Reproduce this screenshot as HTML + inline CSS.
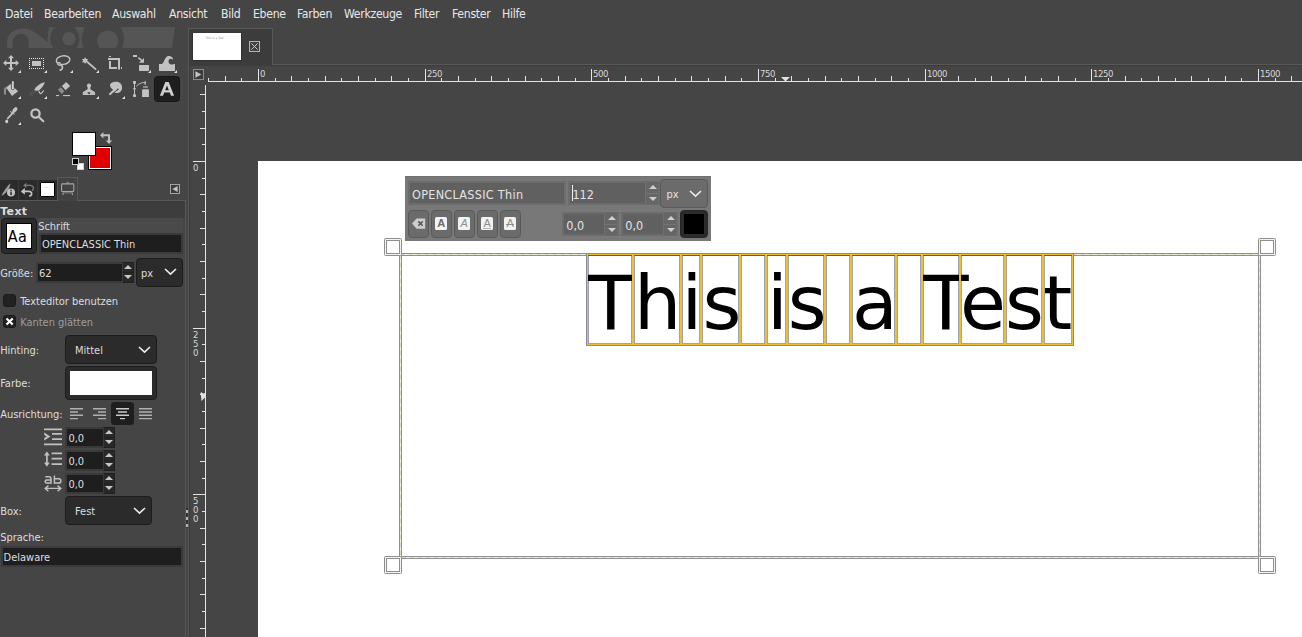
<!DOCTYPE html>
<html lang="de">
<head>
<meta charset="utf-8">
<title>GIMP</title>
<style>
*{box-sizing:border-box;margin:0;padding:0}
html,body{width:1302px;height:637px;overflow:hidden;background:#454545}
body{position:relative;font-family:"DejaVu Sans Condensed","DejaVu Sans","Liberation Sans",sans-serif;font-stretch:condensed;font-size:11px;color:#dedede;line-height:14px;-webkit-font-smoothing:antialiased}
.abs,body>div,body>span,body>i,body>svg{position:absolute}
i.t{position:absolute;display:block;background:#e4e4e4;width:1px}
.rl{position:absolute;font-size:9.5px;line-height:12px;color:#d8d8d8;white-space:nowrap;letter-spacing:-0.4px}
.vl{position:absolute;font-size:9.5px;line-height:9px;color:#d8d8d8;width:10px;text-align:center}
.vl span{display:block}
#menubar{left:0;top:0;width:1302px;height:27px;background:#454545}
#menubar span{position:absolute;top:5px;line-height:18px;white-space:nowrap;color:#e8e8e8;font-size:12.2px;letter-spacing:-0.32px}
#canvas{left:206px;top:82px;width:1096px;height:555px;background:#454545}
#image{left:258px;top:161px;width:1044px;height:476px;background:#fff}
.lbl{position:absolute;white-space:nowrap;line-height:14px;margin-top:1px;margin-left:-0.8px;letter-spacing:-0.03px}
.entry{position:absolute;background:#1e1e1e;border:2px solid #3a3a3a;box-shadow:inset 0 0 0 0 #000}
.entry span{position:absolute;white-space:nowrap;line-height:14px;margin-top:1px;margin-left:-0.6px}
.drop{position:absolute;background:#2b2b2b;border:1px solid #1c1c1c;border-radius:4px}
.drop span{position:absolute;white-space:nowrap;line-height:14px;margin-top:1px;margin-left:-1px}
.ic .c{fill:#e2e2e2}
.spin{position:absolute;width:12px;background:#282828;border:1px solid #202020;border-left-color:#3a3a3a}
.spin b{position:absolute;left:1px;width:0;height:0;border-left:4px solid transparent;border-right:4px solid transparent}
.spin b.u{top:1.8px;border-bottom:4.4px solid #c8c8c8}
.spin b.d{bottom:2.6px;border-top:4.4px solid #c8c8c8}
.spin i{position:absolute;left:0;right:0;top:9px;height:1px;background:#202020}
.chev{position:absolute;fill:none;stroke:#ececec;stroke-width:1.6}
.chk{position:absolute;width:13px;height:13px;background:#222;border:1px solid #1c1c1c;border-radius:3px}
.dh{background:repeating-linear-gradient(90deg,#d8d8d8 0,#d8d8d8 4px,#f4f4c6 4px,#f4f4c6 8px)}
.dv{background:repeating-linear-gradient(180deg,#d8d8d8 0,#d8d8d8 4px,#f4f4c6 4px,#f4f4c6 8px)}
.hd{width:18px;height:18px;border:1px solid #8e8e8e;border-radius:1.5px;background:#fff;box-shadow:inset 0 0 0 1px #f4f4f4,inset 0 0 0 2px #8e8e8e}
#ctext{font-family:"DejaVu Sans","Liberation Sans",sans-serif;font-stretch:normal;font-size:74.67px;line-height:91px;color:#000;white-space:pre;outline:1px solid #878b96;font-kerning:none}
#ctext span{position:absolute;top:0;height:91px;line-height:99px;white-space:pre}
#ctext span.k::first-letter{margin-right:-7.7px}
#ctext i{position:absolute;top:0;height:91px;border:1px solid #ecbe3c;box-shadow:inset 0 0 0 1px rgba(0,0,0,0.36)}
#ov{left:405px;top:176px;width:306px;height:65px;background:#787878;box-shadow:inset 0 1px 0 #707070}
#ov .e{position:absolute;background:#606060;border:2px solid #6c6c6c}
#ov .e span,#ov .b span{position:absolute;white-space:nowrap;line-height:14px;color:#e4e4e4}
#ov .e span{font-size:12.5px;line-height:16px}
#ov .b{position:absolute;background:#6b6b6b;border:1px solid #595959;border-radius:4px}
#ov .sp{position:absolute;width:13px;background:#666;border-left:1px solid #707070}
#ov .sp b{position:absolute;left:2.5px;width:0;height:0;border-left:4px solid transparent;border-right:4px solid transparent}
#ov .sp b.u{top:3px;border-bottom:4.5px solid #d0d0d0}
#ov .sp b.d{bottom:3px;border-top:4.5px solid #d0d0d0}
#ov .sp i{position:absolute;left:0;right:0;top:50%;height:1px;background:#747474;margin-top:-0.5px}
#ov .ai{position:absolute;left:3.2px;top:6px;width:12px;height:12.8px;background:#f2f2f2;border-radius:1.5px;color:#6a6a6a;font-family:"Liberation Sans",sans-serif;font-stretch:normal;font-size:11px;line-height:13.5px;text-align:center}
</style>
</head>
<body>
<!-- menubar -->
<div id="menubar">
<span style="left:5px">Datei</span><span style="left:44px">Bearbeiten</span><span style="left:112px">Auswahl</span><span style="left:169px">Ansicht</span><span style="left:221px">Bild</span><span style="left:253px">Ebene</span><span style="left:297px">Farben</span><span style="left:344px">Werkzeuge</span><span style="left:414px">Filter</span><span style="left:452px">Fenster</span><span style="left:502px">Hilfe</span>
</div>
<!-- wilber -->
<svg class="abs" style="left:0;top:27px" width="186" height="21" viewBox="0 27 186 21">
<g fill="#555555">
<path d="M7 48 L7 42.4 C7 34 14 28.4 22 28.4 C32 28.4 40 35 47.3 42.3 L48.6 27 L84 27 L84 48 Z"/>
<path d="M100 27 L175 27 L172 48 L100 48 Z"/>
</g>
<path d="M13.1 48 L13.1 41.5 A7.75 7.75 0 0 1 28.6 41.5 L28.6 48 Z" fill="#454545"/>
<circle cx="64.8" cy="38.5" r="14.6" fill="#454545"/>
<circle cx="69" cy="38.8" r="6.7" fill="#555555"/>
<circle cx="102.9" cy="39" r="21.2" fill="#454545"/>
<circle cx="107.7" cy="41" r="10.6" fill="#555555"/>
</svg>
<!-- tool icons row 1 -->
<svg class="abs ic" style="left:3px;top:55px" width="19" height="19" viewBox="0 0 19 19"><path fill="#c2c2c2" d="M8 0 L11 3.3 L9 3.3 L9 7 L12.7 7 L12.7 5 L16 8 L12.7 11 L12.7 9 L9 9 L9 12.7 L11 12.7 L8 16 L5 12.7 L7 12.7 L7 9 L3.3 9 L3.3 11 L0 8 L3.3 5 L3.3 7 L7 7 L7 3.3 L5 3.3 Z"/><path class="c" d="M18 15v3h-3z"/></svg>
<svg class="abs ic" style="left:29px;top:55px" width="19" height="19" viewBox="0 0 19 19"><g stroke="#e8e8e8" stroke-width="1" stroke-dasharray="1 1"><path d="M0 3.5H15"/><path d="M0 13.5H15"/><path d="M0.5 3V14"/><path d="M14.5 3V14"/></g><rect x="3" y="6" width="9" height="5" fill="#c2c2c2"/><path class="c" d="M18 15v3h-3z"/></svg>
<svg class="abs ic" style="left:55px;top:55px" width="19" height="19" viewBox="0 0 19 19"><ellipse cx="8.1" cy="5.1" rx="6.8" ry="4.3" transform="rotate(-9 8.1 5.1)" fill="none" stroke="#c2c2c2" stroke-width="1.4"/><circle cx="4" cy="8.8" r="1.5" fill="#9a9a9a" stroke="#c2c2c2" stroke-width="1"/><path d="M5.2 9.8 C8.4 11 8.2 14.6 4.6 15.4" fill="none" stroke="#c2c2c2" stroke-width="1.6"/><path class="c" d="M18 15v3h-3z"/></svg>
<svg class="abs ic" style="left:81px;top:55px" width="19" height="19" viewBox="0 0 19 19"><path fill="#c2c2c2" d="M4.1 2.1 L5.1 3.9 L7.2 3.9 L6.1 5.6 L7.2 7.4 L5.1 7.3 L4.1 9.1 L3.1 7.3 L1 7.4 L2.1 5.6 L1 3.9 L3.1 3.9 Z"/><path d="M6.6 7.2 L14.6 14.1" stroke="#c2c2c2" stroke-width="1.8" stroke-linecap="round"/><path class="c" d="M18 15v3h-3z"/></svg>
<svg class="abs ic" style="left:107px;top:55px" width="19" height="19" viewBox="0 0 19 19"><path fill="#c2c2c2" d="M1 3H13V14.6H11V5H1Z"/><path fill="#c2c2c2" d="M2 6H4V12H10V14H2Z"/><rect x="2" y="1" width="2" height="1" fill="#c2c2c2"/><rect x="14" y="12" width="1" height="2" fill="#c2c2c2"/></svg>
<svg class="abs ic" style="left:133px;top:55px" width="19" height="19" viewBox="0 0 19 19"><rect x="0" y="0" width="4" height="2" fill="#c2c2c2"/><path d="M5.4 2.6 L9.6 6.4" stroke="#c2c2c2" stroke-width="1.5"/><path fill="#c2c2c2" d="M11 3 L11 7.8 L6 7.8 Z"/><rect x="6" y="10" width="10" height="6" rx="0.5" fill="#c2c2c2"/><path class="c" d="M18 15v3h-3z"/></svg>
<svg class="abs ic" style="left:159px;top:55px" width="19" height="19" viewBox="0 0 19 19"><path fill="#c2c2c2" d="M0 9 L2.6 9 C5.6 8.6 5.2 1 9.8 1 C12.6 1 14.3 2.8 13.9 4.7 C12.6 3.5 10.6 3.6 9.8 5 C9 6.6 9.6 8.6 11.4 9.3 C12.6 9.7 14.4 9.4 16 9 L16 16 L0 16 Z"/><path class="c" d="M18 15v3h-3z"/></svg>
<!-- row 2 -->
<svg class="abs ic" style="left:3px;top:81px" width="19" height="19" viewBox="0 0 19 19"><path fill="#8e8e8e" d="M0.9 13.6 L0.9 8.8 C0.9 7 2 6.4 3.4 5.8 L7 3.6 L7.6 5.4 L4.2 7.4 C3.2 7.8 3 8.4 3 9.2 L3 13.6 Z"/><path fill="#c2c2c2" d="M7.3 3 L15.1 10.3 L9 15.1 L3.45 6.9 Z"/><rect x="8.2" y="-0.6" width="3.2" height="9.6" rx="1.6" fill="#454545"/><rect x="8.9" y="0" width="1.9" height="8.4" rx="0.9" fill="#d0d0d0"/><path class="c" d="M18 15v3h-3z"/></svg>
<svg class="abs ic" style="left:29px;top:81px" width="19" height="19" viewBox="0 0 19 19"><path fill="#c4c4c4" d="M15.9 1.1 C11.4 2.2 7.2 5 5 9.3 C6.6 9.8 8.4 9.9 9.8 9.5 C12.6 7.4 14.8 4.6 15.9 1.1 Z"/><g stroke="#b4b4b4" stroke-width="0.4" stroke-dasharray="0.6 1.1" fill="none"><path d="M5.2 9.6 L0.9 15"/><path d="M6.6 10 L2.6 15.2"/><path d="M4 9.8 L0.2 14"/></g><path d="M9.9 9.8 C10.3 12.4 11.6 13 12.6 12.1 C13.4 11.4 13.8 10.2 14.7 9.3" fill="none" stroke="#c4c4c4" stroke-width="1.2"/><path class="c" d="M18 15v3h-3z"/></svg>
<svg class="abs ic" style="left:55px;top:81px" width="19" height="19" viewBox="0 0 19 19"><path fill="#c2c2c2" d="M11.2 0.9 L15.1 5 L10.5 9.3 L6.9 5 Z"/><path fill="#8c8c8c" d="M5.8 6.2 L9.3 10.3 L6.7 12.9 L3 8.6 Z"/><rect x="0.9" y="14" width="3.2" height="1.1" fill="#c2c2c2"/><rect x="8" y="14" width="7.1" height="1.1" fill="#c2c2c2"/></svg>
<svg class="abs ic" style="left:81px;top:81px" width="19" height="19" viewBox="0 0 19 19"><circle cx="8" cy="4.7" r="2.1" fill="#c2c2c2"/><path fill="#c2c2c2" d="M6.9 5.6 L9.1 5.6 L9.4 8.2 L13.5 10.8 C14 11.1 14.1 11.4 14.1 11.9 L14.1 14.1 L1.8 14.1 L1.8 11.9 C1.8 11.4 1.9 11.1 2.4 10.8 L6.6 8.2 Z"/><path d="M1.8 12.3H14.1 M1.8 13.2H14.1" stroke="#b0b0b0" stroke-width="0.3"/><path fill="#3c3c3c" d="M6.3 11.2 L9.7 11.2 L8 13.5 Z"/><path class="c" d="M18 15v3h-3z"/></svg>
<svg class="abs ic" style="left:107px;top:81px" width="19" height="19" viewBox="0 0 19 19"><path fill="#c2c2c2" d="M3 4.6 C2.8 2.2 5.8 0.7 9.4 0.7 C12.8 0.7 15.1 3.2 15.1 6.4 C15.1 9.8 12.8 12 9.8 12 C8.2 12 7 11.4 7.2 10 L3.6 6.4 Z"/><ellipse cx="10.5" cy="8.5" rx="1.3" ry="0.8" transform="rotate(-35 10.5 8.5)" fill="#454545"/><path d="M10 9 L6.6 12" stroke="#454545" stroke-width="1"/><path d="M9.2 7.4 L3.1 13.1" stroke="#c2c2c2" stroke-width="2.1" stroke-linecap="round"/><path class="c" d="M18 15v3h-3z"/></svg>
<svg class="abs ic" style="left:133px;top:81px" width="19" height="19" viewBox="0 0 19 19"><path d="M1.5 1 L1.5 15" stroke="#c2c2c2" stroke-width="1"/><rect x="0" y="0" width="3" height="2.8" rx="0.5" fill="#c2c2c2"/><path fill="#c2c2c2" d="M1.5 6.2 L3 7.75 L1.5 9.3 L0 7.75 Z"/><rect x="0" y="13.3" width="3" height="2.7" rx="0.4" fill="#c2c2c2"/><path d="M3.2 5.4 C5.4 3 8.2 1.6 11.6 1.4" fill="none" stroke="#c2c2c2" stroke-width="0.9"/><path fill="#c2c2c2" d="M11 0.9 L12.9 0 L12.9 3.7 L11.8 3.7 Z"/><rect x="10.1" y="5.2" width="4.8" height="1.5" fill="#a8a8a8"/><path fill="#c2c2c2" d="M9.1 9.6 C9.1 8.7 9.6 8.3 10.4 8.3 L14.6 8.3 C15.4 8.3 15.9 8.7 15.9 9.6 L15.9 15.9 L9.1 15.9 Z"/></svg>
<div class="abs" style="left:154px;top:76px;width:26px;height:26px;background:#1e1e1e;border-radius:3.5px;border:1px solid #181818"></div>
<svg class="abs ic" style="left:159px;top:81px" width="19" height="19" viewBox="0 0 19 19"><path fill="#cecece" fill-rule="evenodd" d="M6.3 1 L9.7 1 L15.1 14.8 L12 14.8 L10.8 11.5 L5.2 11.5 L4 14.8 L0.9 14.8 Z M8 4.6 L6.2 9.3 L9.8 9.3 Z"/></svg>
<!-- row 3 -->
<svg class="abs ic" style="left:3px;top:107px" width="19" height="19" viewBox="0 0 19 19"><ellipse cx="11.9" cy="2.9" rx="1.9" ry="3.2" transform="rotate(38 11.9 2.9)" fill="#c2c2c2"/><path d="M7.2 4.4 L11.6 7.4" stroke="#c2c2c2" stroke-width="1.1"/><path d="M10 5.6 L4.6 11.6" stroke="#c2c2c2" stroke-width="1.7" stroke-linecap="round"/><ellipse cx="3.7" cy="14.5" rx="1.5" ry="1.7" fill="#d0d0d0"/><path class="c" d="M18 15v3h-3z"/></svg>
<svg class="abs ic" style="left:29px;top:107px" width="19" height="19" viewBox="0 0 19 19"><circle cx="6.5" cy="6.5" r="4.1" fill="none" stroke="#c2c2c2" stroke-width="2.3"/><path d="M9.9 10 L14.3 14.3" stroke="#c2c2c2" stroke-width="2.2" stroke-linecap="round"/></svg>
<!-- colours -->
<div class="abs" style="left:88px;top:146px;width:24px;height:24px;background:#e00000;border:1px solid #000;box-shadow:inset 0 0 0 1px #fff"></div>
<div class="abs" style="left:72px;top:132px;width:24px;height:24px;background:#fff;border:1px solid #000"></div>
<svg class="abs" style="left:100px;top:132px" width="13" height="13" viewBox="0 0 13 13"><path fill="#bebebe" d="M0 3.2 L3.4 0 L3.4 2.2 L10 2.2 L10 8.4 L12.2 8.4 L9 12 L5.8 8.4 L8 8.4 L8 4.2 L3.4 4.2 L3.4 6.4 Z"/></svg>
<div class="abs" style="left:77px;top:163px;width:7px;height:7px;background:#fff;border:1px solid #d0d0d0"></div>
<div class="abs" style="left:72px;top:158px;width:7px;height:7px;background:#000;border:1px solid #d0d0d0"></div>

<!-- dock tabs -->
<div class="abs" style="left:0;top:180px;width:57px;height:21px;background:#2b2b2b"></div>
<div class="abs" style="left:18px;top:180px;width:1px;height:20px;background:#3a3a3a"></div>
<div class="abs" style="left:37px;top:180px;width:1px;height:20px;background:#3a3a3a"></div>
<div class="abs" style="left:0;top:200px;width:186px;height:1px;background:#585858"></div>
<div class="abs" style="left:57px;top:177px;width:21px;height:24px;background:#434343;border:1px solid #585858;border-bottom:none"></div>
<div class="abs" style="left:185px;top:200px;width:1px;height:437px;background:#585858"></div>
<svg class="abs" style="left:1px;top:182px" width="16" height="16" viewBox="0 0 16 16"><path d="M1 12.6 C3 9 6 4.6 9.2 1.2 C9.4 5 6 10 1.6 13.4 Z" fill="#a8a8a8"/><path d="M0.6 13.6 L9 2" stroke="#8c8c8c" stroke-width="0.7"/><circle cx="10" cy="10.4" r="4" fill="#c4c4c4"/><rect x="9.3" y="9.6" width="1.5" height="3.6" fill="#2b2b2b"/><rect x="9.3" y="7.6" width="1.5" height="1.3" fill="#2b2b2b"/></svg>
<svg class="abs" style="left:20px;top:182px" width="16" height="16" viewBox="0 0 16 16"><path d="M5 3.4 L10 3.4 C12.4 3.4 13.4 5 13.4 6.4 C13.4 7.4 13 8.2 12.2 8.8" fill="none" stroke="#7c7c7c" stroke-width="1.3"/><path d="M6.4 0.8 L3.2 3.4 L6.4 6 Z" fill="#7c7c7c"/><path d="M4 9.4 L9 9.4 C11.6 9.4 12 11.6 11.4 12.8 C11 13.6 10.2 14 9 14" fill="none" stroke="#c4c4c4" stroke-width="1.7"/><path d="M4.8 6 L0.8 9.4 L4.8 12.8 Z" fill="#c4c4c4"/></svg>
<div class="abs" style="left:40px;top:182px;width:15px;height:15px;background:#fff;border:1px solid #000;border-radius:1px"></div>
<div class="abs" style="left:44px;top:187px;width:5px;height:1px;background:#e4e4e4"></div>
<svg class="abs" style="left:60px;top:181px" width="16" height="16" viewBox="0 0 16 16"><rect x="1.6" y="2.9" width="12.2" height="7.6" rx="0.8" fill="none" stroke="#a8a8a8" stroke-width="1.1"/><path d="M6.3 2.4 L7.7 1 L9.1 2.4" fill="none" stroke="#a8a8a8" stroke-width="0.9"/><rect x="2.4" y="11.3" width="10.6" height="1.1" fill="#7e7e7e"/><path d="M3.4 12 L2.8 14 M12 12 L12.6 14" stroke="#a8a8a8" stroke-width="1"/></svg>
<svg class="abs" style="left:170px;top:184px" width="10" height="10" viewBox="0 0 10 10"><rect x="0.5" y="0.5" width="9" height="9" fill="#3c3c3c" stroke="#a4a4a4"/><path d="M7.6 2 L2.4 5 L7.6 8 Z" fill="#c4c4c4"/></svg>
<!-- tool options -->
<div class="abs" style="left:0;top:201px;width:185px;height:17px;background:#3d3d3d"></div>
<div class="abs" style="left:38px;top:218px;width:145px;height:15px;background:#4a4a4a"></div>
<span class="lbl" style="left:1px;top:204px;font-weight:bold;color:#dcdcdc;font-size:11px;font-family:'DejaVu Sans','Liberation Sans',sans-serif;font-stretch:normal;letter-spacing:0.35px">Text</span>
<div class="abs" style="left:1px;top:218px;width:36px;height:36px;background:#2b2b2b;border:1px solid #1c1c1c;border-radius:4px"></div>
<div class="abs" style="left:6px;top:223px;width:26px;height:26px;background:#fff;border:1px solid #000"></div>
<span class="lbl" style="left:39px;top:219px">Schrift</span>
<div class="entry" style="left:39px;top:233px;width:144px;height:21px"><span style="left:1.5px;top:2px;letter-spacing:-0.02px">OPENCLASSIC Thin</span></div>
<span class="lbl" style="left:1px;top:266px">Größe:</span>
<div class="entry" style="left:36px;top:262px;width:98px;height:21px"><span style="left:1.5px;top:2px">62</span></div>
<div class="spin" style="left:122px;top:262px;height:21px"><b class="u"></b><i></i><b class="d"></b></div>
<div class="drop" style="left:136px;top:258px;width:47px;height:29px"><span style="left:5px;top:7px">px</span><svg class="chev" style="left:26.5px;top:9px" width="13" height="8" viewBox="0 0 13 8"><path d="M1 1 L6.5 6.2 L12 1"/></svg></div>
<div class="chk" style="left:3px;top:294px"></div>
<span class="lbl" style="left:21px;top:294px">Texteditor benutzen</span>
<div class="chk" style="left:3px;top:315px"><svg width="13" height="13" viewBox="0 0 13 13" style="position:absolute;left:-1px;top:-1px"><path d="M3.5 3.6 L9.7 9.6 M9.7 3.6 L3.5 9.6" stroke="#fff" stroke-width="2.1"/></svg></div>
<span class="lbl" style="left:21px;top:315px;color:#9c9c9c">Kanten glätten</span>
<span class="lbl" style="left:1px;top:343px">Hinting:</span>
<div class="drop" style="left:65px;top:335px;width:92px;height:29px"><span style="left:10px;top:7px">Mittel</span><svg class="chev" style="left:72px;top:10px" width="13" height="8" viewBox="0 0 13 8"><path d="M1 1 L6.5 6.2 L12 1"/></svg></div>
<span class="lbl" style="left:1px;top:376px">Farbe:</span>
<div class="drop" style="left:65px;top:366px;width:92px;height:34px"></div>
<div class="abs" style="left:70px;top:371px;width:82px;height:24px;background:#fff"></div>
<span class="lbl" style="left:1px;top:407px">Ausrichtung:</span>
<div class="abs" style="left:111px;top:402px;width:23px;height:23px;background:#1e1e1e;border-radius:3.5px"></div>
<svg class="abs" style="left:70px;top:408px" width="83" height="12" viewBox="0 0 83 12" fill="#b0b0b0"><path d="M0 0h13v1.4H0z M0 3.3h8v1.4H0z M0 6.6h13v1.4H0z M0 9.9h8v1.4H0z"/><path d="M23 0h13v1.4H23z M28 3.3h8v1.4H28z M23 6.6h13v1.4H23z M28 9.9h8v1.4H28z"/><path fill="#c8c8c8" d="M46 0h13v1.4H46z M48 3.3h9v1.4H48z M46 6.6h13v1.4H46z M50 9.9h5v1.4H50z"/><path d="M69 0h13v1.4H69z M69 3.3h13v1.4H69z M69 6.6h13v1.4H69z M69 9.9h13v1.4H69z"/></svg>
<svg class="abs" style="left:44px;top:428px" width="18" height="18" viewBox="0 0 18 18" fill="#c0c0c0"><path d="M0 0.4h18v1.8H0z M8 5h10v1.8H8z M8 10.2h10v1.8H8z M0 15.4h18v1.8H0z"/><path d="M0.2 4.6 L6.4 8.5 L0.2 12.4 L0.2 10 L2.8 8.5 L0.2 7 Z"/></svg>
<div class="entry" style="left:65px;top:427px;width:50px;height:21px"><span style="left:2px;top:2px">0,0</span></div>
<div class="spin" style="left:103px;top:427px;height:21px"><b class="u"></b><i></i><b class="d"></b></div>
<svg class="abs" style="left:44px;top:451px" width="18" height="18" viewBox="0 0 18 18" fill="#c0c0c0"><path d="M7.6 1.4h10.4v1.8H7.6z M7.6 6.8h10.4v1.8H7.6z M7.6 12.2h10.4v1.8H7.6z"/><path d="M2.9 2 L2.9 14" stroke="#c0c0c0" stroke-width="1.7"/><path d="M0 4.6 L2.9 0.4 L5.8 4.6 Z M0 11.4 L2.9 15.8 L5.8 11.4 Z"/></svg>
<div class="entry" style="left:65px;top:450px;width:50px;height:21px"><span style="left:2px;top:2px">0,0</span></div>
<div class="spin" style="left:103px;top:450px;height:21px"><b class="u"></b><i></i><b class="d"></b></div>
<svg class="abs" style="left:44px;top:475px" width="18" height="18" viewBox="0 0 18 18" fill="none" stroke="#c0c0c0"><path stroke-width="1.5" d="M1.4 1.8 L5 1.8 C6.4 1.8 7 2.6 7 3.8 L7 8 L2.8 8 C0.6 8 0.6 5 2.8 5 L7 5"/><path stroke-width="1.5" d="M10.4 0.6 L10.4 8 L14.6 8 C17.6 8 17.6 3.8 14.6 3.8 L10.4 3.8"/><path stroke-width="1.4" d="M1.2 13.4 L16.8 13.4 M4.4 10.6 L1.2 13.4 L4.4 16.2 M13.6 10.6 L16.8 13.4 L13.6 16.2"/></svg>
<div class="entry" style="left:65px;top:473px;width:50px;height:21px"><span style="left:2px;top:2px">0,0</span></div>
<div class="spin" style="left:103px;top:473px;height:21px"><b class="u"></b><i></i><b class="d"></b></div>
<span class="lbl" style="left:1px;top:504px">Box:</span>
<div class="drop" style="left:65px;top:496px;width:87px;height:29px"><span style="left:10px;top:7px">Fest</span><svg class="chev" style="left:67px;top:10px" width="13" height="8" viewBox="0 0 13 8"><path d="M1 1 L6.5 6.2 L12 1"/></svg></div>
<span class="lbl" style="left:1px;top:530px">Sprache:</span>
<div class="entry" style="left:1px;top:546px;width:182px;height:21px"><span style="left:1.2px;top:2px">Delaware</span></div>

<!-- image tab bar -->
<div class="abs" style="left:189px;top:66px;width:1px;height:571px;background:#3b3b3b"></div>
<div class="abs" style="left:188px;top:28px;width:1px;height:609px;background:#585858"></div>
<div class="abs" style="left:189px;top:64px;width:1113px;height:2px;background:#3c3c3c"></div>
<div class="abs" style="left:188px;top:28px;width:85px;height:37px;background:#3c3c3c;border:1px solid #585858;border-bottom:none"></div>
<div class="abs" style="left:272px;top:64px;width:1030px;height:1px;background:#585858"></div>
<div class="abs" style="left:192px;top:32px;width:50px;height:29px;background:#fff;border:1px solid #303030;border-top-color:#383838"></div>
<span class="abs" style="left:205.5px;top:36.3px;font-size:3.2px;line-height:5px;color:#909090;white-space:nowrap;letter-spacing:0">This is a Test</span>
<svg class="abs" style="left:249px;top:41px" width="11" height="11" viewBox="0 0 11 11"><rect x="0.5" y="0.5" width="10" height="10" fill="#404040" stroke="#b4b4b4"/><path d="M2.4 2.4 L8.6 8.6 M8.6 2.4 L2.4 8.6" stroke="#c8c8c8" stroke-width="1"/></svg>
<svg class="abs" style="left:193px;top:69px" width="11" height="11" viewBox="0 0 11 11"><rect x="0.5" y="0.5" width="10" height="10" fill="#3c3c3c" stroke="#8c8c8c"/><path d="M2.4 2.2 L8.4 5.5 L2.4 8.8 Z" fill="#c4c4c4"/></svg>
<!-- divider handle -->
<div class="abs" style="left:186px;top:508px;width:2px;height:20px;background:#333"></div>
<div class="abs" style="left:186px;top:509.5px;width:2px;height:3.4px;background:#b4b4b4"></div>
<div class="abs" style="left:186px;top:516.5px;width:2px;height:3.4px;background:#b4b4b4"></div>
<div class="abs" style="left:186px;top:523.5px;width:2px;height:3.4px;background:#b4b4b4"></div>

<!-- rulers -->
<div id="canvas"></div>
<i class="t" style="left:208px;top:81px;width:1094px;height:1px"></i>
<i class="t" style="left:205px;top:85px;width:1px;height:552px"></i>
<i class="t" style="left:208px;top:78px;height:3px"></i>
<i class="t" style="left:225px;top:76px;height:5px"></i>
<i class="t" style="left:241px;top:78px;height:3px"></i>
<i class="t" style="left:258px;top:69px;height:12px"></i>
<span class="rl" style="left:260px;top:68px">0</span>
<i class="t" style="left:275px;top:78px;height:3px"></i>
<i class="t" style="left:291px;top:76px;height:5px"></i>
<i class="t" style="left:308px;top:78px;height:3px"></i>
<i class="t" style="left:325px;top:76px;height:5px"></i>
<i class="t" style="left:341px;top:78px;height:3px"></i>
<i class="t" style="left:358px;top:76px;height:5px"></i>
<i class="t" style="left:375px;top:78px;height:3px"></i>
<i class="t" style="left:391px;top:76px;height:5px"></i>
<i class="t" style="left:408px;top:78px;height:3px"></i>
<i class="t" style="left:425px;top:69px;height:12px"></i>
<span class="rl" style="left:427px;top:68px">250</span>
<i class="t" style="left:441px;top:78px;height:3px"></i>
<i class="t" style="left:458px;top:76px;height:5px"></i>
<i class="t" style="left:475px;top:78px;height:3px"></i>
<i class="t" style="left:491px;top:76px;height:5px"></i>
<i class="t" style="left:508px;top:78px;height:3px"></i>
<i class="t" style="left:525px;top:76px;height:5px"></i>
<i class="t" style="left:541px;top:78px;height:3px"></i>
<i class="t" style="left:558px;top:76px;height:5px"></i>
<i class="t" style="left:575px;top:78px;height:3px"></i>
<i class="t" style="left:591px;top:69px;height:12px"></i>
<span class="rl" style="left:593px;top:68px">500</span>
<i class="t" style="left:608px;top:78px;height:3px"></i>
<i class="t" style="left:625px;top:76px;height:5px"></i>
<i class="t" style="left:641px;top:78px;height:3px"></i>
<i class="t" style="left:658px;top:76px;height:5px"></i>
<i class="t" style="left:675px;top:78px;height:3px"></i>
<i class="t" style="left:691px;top:76px;height:5px"></i>
<i class="t" style="left:708px;top:78px;height:3px"></i>
<i class="t" style="left:725px;top:76px;height:5px"></i>
<i class="t" style="left:741px;top:78px;height:3px"></i>
<i class="t" style="left:758px;top:69px;height:12px"></i>
<span class="rl" style="left:760px;top:68px">750</span>
<i class="t" style="left:775px;top:78px;height:3px"></i>
<i class="t" style="left:791px;top:76px;height:5px"></i>
<i class="t" style="left:808px;top:78px;height:3px"></i>
<i class="t" style="left:825px;top:76px;height:5px"></i>
<i class="t" style="left:841px;top:78px;height:3px"></i>
<i class="t" style="left:858px;top:76px;height:5px"></i>
<i class="t" style="left:875px;top:78px;height:3px"></i>
<i class="t" style="left:891px;top:76px;height:5px"></i>
<i class="t" style="left:908px;top:78px;height:3px"></i>
<i class="t" style="left:925px;top:69px;height:12px"></i>
<span class="rl" style="left:927px;top:68px">1000</span>
<i class="t" style="left:941px;top:78px;height:3px"></i>
<i class="t" style="left:958px;top:76px;height:5px"></i>
<i class="t" style="left:975px;top:78px;height:3px"></i>
<i class="t" style="left:991px;top:76px;height:5px"></i>
<i class="t" style="left:1008px;top:78px;height:3px"></i>
<i class="t" style="left:1025px;top:76px;height:5px"></i>
<i class="t" style="left:1041px;top:78px;height:3px"></i>
<i class="t" style="left:1058px;top:76px;height:5px"></i>
<i class="t" style="left:1075px;top:78px;height:3px"></i>
<i class="t" style="left:1091px;top:69px;height:12px"></i>
<span class="rl" style="left:1093px;top:68px">1250</span>
<i class="t" style="left:1108px;top:78px;height:3px"></i>
<i class="t" style="left:1125px;top:76px;height:5px"></i>
<i class="t" style="left:1141px;top:78px;height:3px"></i>
<i class="t" style="left:1158px;top:76px;height:5px"></i>
<i class="t" style="left:1175px;top:78px;height:3px"></i>
<i class="t" style="left:1191px;top:76px;height:5px"></i>
<i class="t" style="left:1208px;top:78px;height:3px"></i>
<i class="t" style="left:1225px;top:76px;height:5px"></i>
<i class="t" style="left:1241px;top:78px;height:3px"></i>
<i class="t" style="left:1258px;top:69px;height:12px"></i>
<span class="rl" style="left:1260px;top:68px">1500</span>
<i class="t" style="left:1275px;top:78px;height:3px"></i>
<i class="t" style="left:1291px;top:76px;height:5px"></i>
<i class="t" style="top:94px;left:200px;width:5px;height:1px"></i>
<i class="t" style="top:111px;left:202px;width:3px;height:1px"></i>
<i class="t" style="top:128px;left:200px;width:5px;height:1px"></i>
<i class="t" style="top:144px;left:202px;width:3px;height:1px"></i>
<i class="t" style="top:161px;left:193px;width:12px;height:1px"></i>
<span class="vl" style="top:162.5px;left:190.6px"><span>0</span></span>
<i class="t" style="top:178px;left:202px;width:3px;height:1px"></i>
<i class="t" style="top:194px;left:200px;width:5px;height:1px"></i>
<i class="t" style="top:211px;left:202px;width:3px;height:1px"></i>
<i class="t" style="top:228px;left:200px;width:5px;height:1px"></i>
<i class="t" style="top:244px;left:202px;width:3px;height:1px"></i>
<i class="t" style="top:261px;left:200px;width:5px;height:1px"></i>
<i class="t" style="top:278px;left:202px;width:3px;height:1px"></i>
<i class="t" style="top:294px;left:200px;width:5px;height:1px"></i>
<i class="t" style="top:311px;left:202px;width:3px;height:1px"></i>
<i class="t" style="top:328px;left:193px;width:12px;height:1px"></i>
<span class="vl" style="top:329.5px;left:190.6px"><span>2</span><span>5</span><span>0</span></span>
<i class="t" style="top:344px;left:202px;width:3px;height:1px"></i>
<i class="t" style="top:361px;left:200px;width:5px;height:1px"></i>
<i class="t" style="top:378px;left:202px;width:3px;height:1px"></i>
<i class="t" style="top:394px;left:200px;width:5px;height:1px"></i>
<i class="t" style="top:411px;left:202px;width:3px;height:1px"></i>
<i class="t" style="top:428px;left:200px;width:5px;height:1px"></i>
<i class="t" style="top:444px;left:202px;width:3px;height:1px"></i>
<i class="t" style="top:461px;left:200px;width:5px;height:1px"></i>
<i class="t" style="top:478px;left:202px;width:3px;height:1px"></i>
<i class="t" style="top:494px;left:193px;width:12px;height:1px"></i>
<span class="vl" style="top:495.5px;left:190.6px"><span>5</span><span>0</span><span>0</span></span>
<i class="t" style="top:511px;left:202px;width:3px;height:1px"></i>
<i class="t" style="top:528px;left:200px;width:5px;height:1px"></i>
<i class="t" style="top:544px;left:202px;width:3px;height:1px"></i>
<i class="t" style="top:561px;left:200px;width:5px;height:1px"></i>
<i class="t" style="top:578px;left:202px;width:3px;height:1px"></i>
<i class="t" style="top:594px;left:200px;width:5px;height:1px"></i>
<i class="t" style="top:611px;left:202px;width:3px;height:1px"></i>
<i class="t" style="top:628px;left:200px;width:5px;height:1px"></i>
<svg class="abs" style="left:780px;top:77px" width="11" height="5" viewBox="0 0 11 5"><path d="M1 0 L10 0 L5.5 4.6 Z" fill="#e2e2e2"/></svg>
<svg class="abs" style="left:199px;top:391px" width="7" height="11" viewBox="0 0 7 11"><path d="M1 3.3 L2.3 1 L4 2.5 L6 2 L6 6.5 L2.5 10 L2 4.5 Z" fill="#e2e2e2"/></svg>
<div id="image"></div>
<div class="abs" id="ov">
<div class="e" style="left:3px;top:5px;width:158px;height:24px"><span style="left:2px;top:4px;letter-spacing:0.3px">OPENCLASSIC Thin</span></div>
<div class="e" style="left:163px;top:5px;width:92px;height:24px"><span style="left:2.4px;top:4px">112</span><div style="position:absolute;left:2px;top:2px;width:1px;height:16px;background:#f0f0f0"></div></div>
<div class="sp" style="left:240px;top:6px;height:22px"><b class="u"></b><i></i><b class="d"></b></div>
<div class="b" style="left:255px;top:3px;width:48px;height:29px"><span style="left:5.5px;top:8px">px</span><svg class="chev" style="left:28px;top:10px" width="13" height="8" viewBox="0 0 13 8"><path d="M1 1 L6.5 6.2 L12 1"/></svg></div>
<div class="b" style="left:3px;top:34px;width:21px;height:28px"><svg style="position:absolute;left:3px;top:6.5px" width="14" height="12" viewBox="0 0 14 12"><path d="M0 5.6 L4.6 0.4 L13.2 0.4 L13.2 10.8 L4.6 10.8 Z" fill="#cdcdcd"/><path d="M6.3 3.4 L10.7 7.8 M10.7 3.4 L6.3 7.8" stroke="#555" stroke-width="1.5"/></svg></div>
<div class="b" style="left:26px;top:34px;width:21px;height:28px"><div class="ai" style="font-weight:bold">A</div></div>
<div class="b" style="left:49px;top:34px;width:21px;height:28px"><div class="ai" style="font-style:italic;color:#909090">A</div></div>
<div class="b" style="left:72px;top:34px;width:21px;height:28px"><div class="ai" style="color:#8c8c8c">A<i style="position:absolute;left:2px;right:2px;bottom:0.8px;height:1.2px;background:#b4b4b4"></i></div></div>
<div class="b" style="left:95px;top:34px;width:21px;height:28px"><div class="ai" style="color:#8c8c8c">A<i style="position:absolute;left:2px;right:2px;top:7px;height:1px;background:#8c8c8c"></i></div></div>
<div class="e" style="left:157px;top:36px;width:57px;height:24px"><span style="left:2.3px;top:4px">0,0</span></div>
<div class="sp" style="left:199px;top:37px;height:22px"><b class="u"></b><i></i><b class="d"></b></div>
<div class="e" style="left:216px;top:36px;width:57px;height:24px"><span style="left:2.3px;top:4px">0,0</span></div>
<div class="sp" style="left:258px;top:37px;height:22px"><b class="u"></b><i></i><b class="d"></b></div>
<div class="b" style="left:275px;top:34px;width:28px;height:28px;background:#2c2c2c;border-color:#262626"><div style="position:absolute;left:3px;top:3px;width:20px;height:20px;background:#000"></div></div>
</div>

<!-- text box frame -->
<div class="abs" style="left:399px;top:253px;width:862px;height:306px;border:1px solid #909090"></div>
<div class="abs" style="left:401px;top:255px;width:858px;height:302px;border:1px solid #909090"></div>
<div class="abs dh" style="left:401px;top:254px;width:858px;height:1px"></div>
<div class="abs dh" style="left:401px;top:557px;width:858px;height:1px;background-position:1px 0"></div>
<div class="abs dv" style="left:400px;top:255px;width:1px;height:302px"></div>
<div class="abs dv" style="left:1259px;top:255px;width:1px;height:302px;background-position:0 -3px"></div>
<div class="abs hd" style="left:384px;top:238px"></div>
<div class="abs hd" style="left:1258px;top:238px"></div>
<div class="abs hd" style="left:384px;top:556px"></div>
<div class="abs hd" style="left:1258px;top:556px"></div>
<!-- text with per-glyph selection boxes -->
<div class="abs" id="ctext" style="left:587px;top:254px;width:486px;height:91px"><span style="left:1px;letter-spacing:0.3px">This</span> <span style="left:180px">is</span> <span style="left:265px">a</span> <span class="k" style="left:336px;letter-spacing:-0.9px">Test</span><i style="left:0px;width:46px"></i><i style="left:46px;width:48px"></i><i style="left:94px;width:20px"></i><i style="left:114px;width:39px"></i><i style="left:153px;width:26px"></i><i style="left:179px;width:21px"></i><i style="left:200px;width:38px"></i><i style="left:238px;width:26px"></i><i style="left:264px;width:45px"></i><i style="left:309px;width:26px"></i><i style="left:335px;width:38px"></i><i style="left:373px;width:45px"></i><i style="left:418px;width:38px"></i><i style="left:456px;width:30px"></i></div>

<span class="lbl" style="left:8.5px;top:224.5px;font-size:16px;line-height:22px;color:#000;letter-spacing:0.4px">Aa</span>

</body>
</html>
